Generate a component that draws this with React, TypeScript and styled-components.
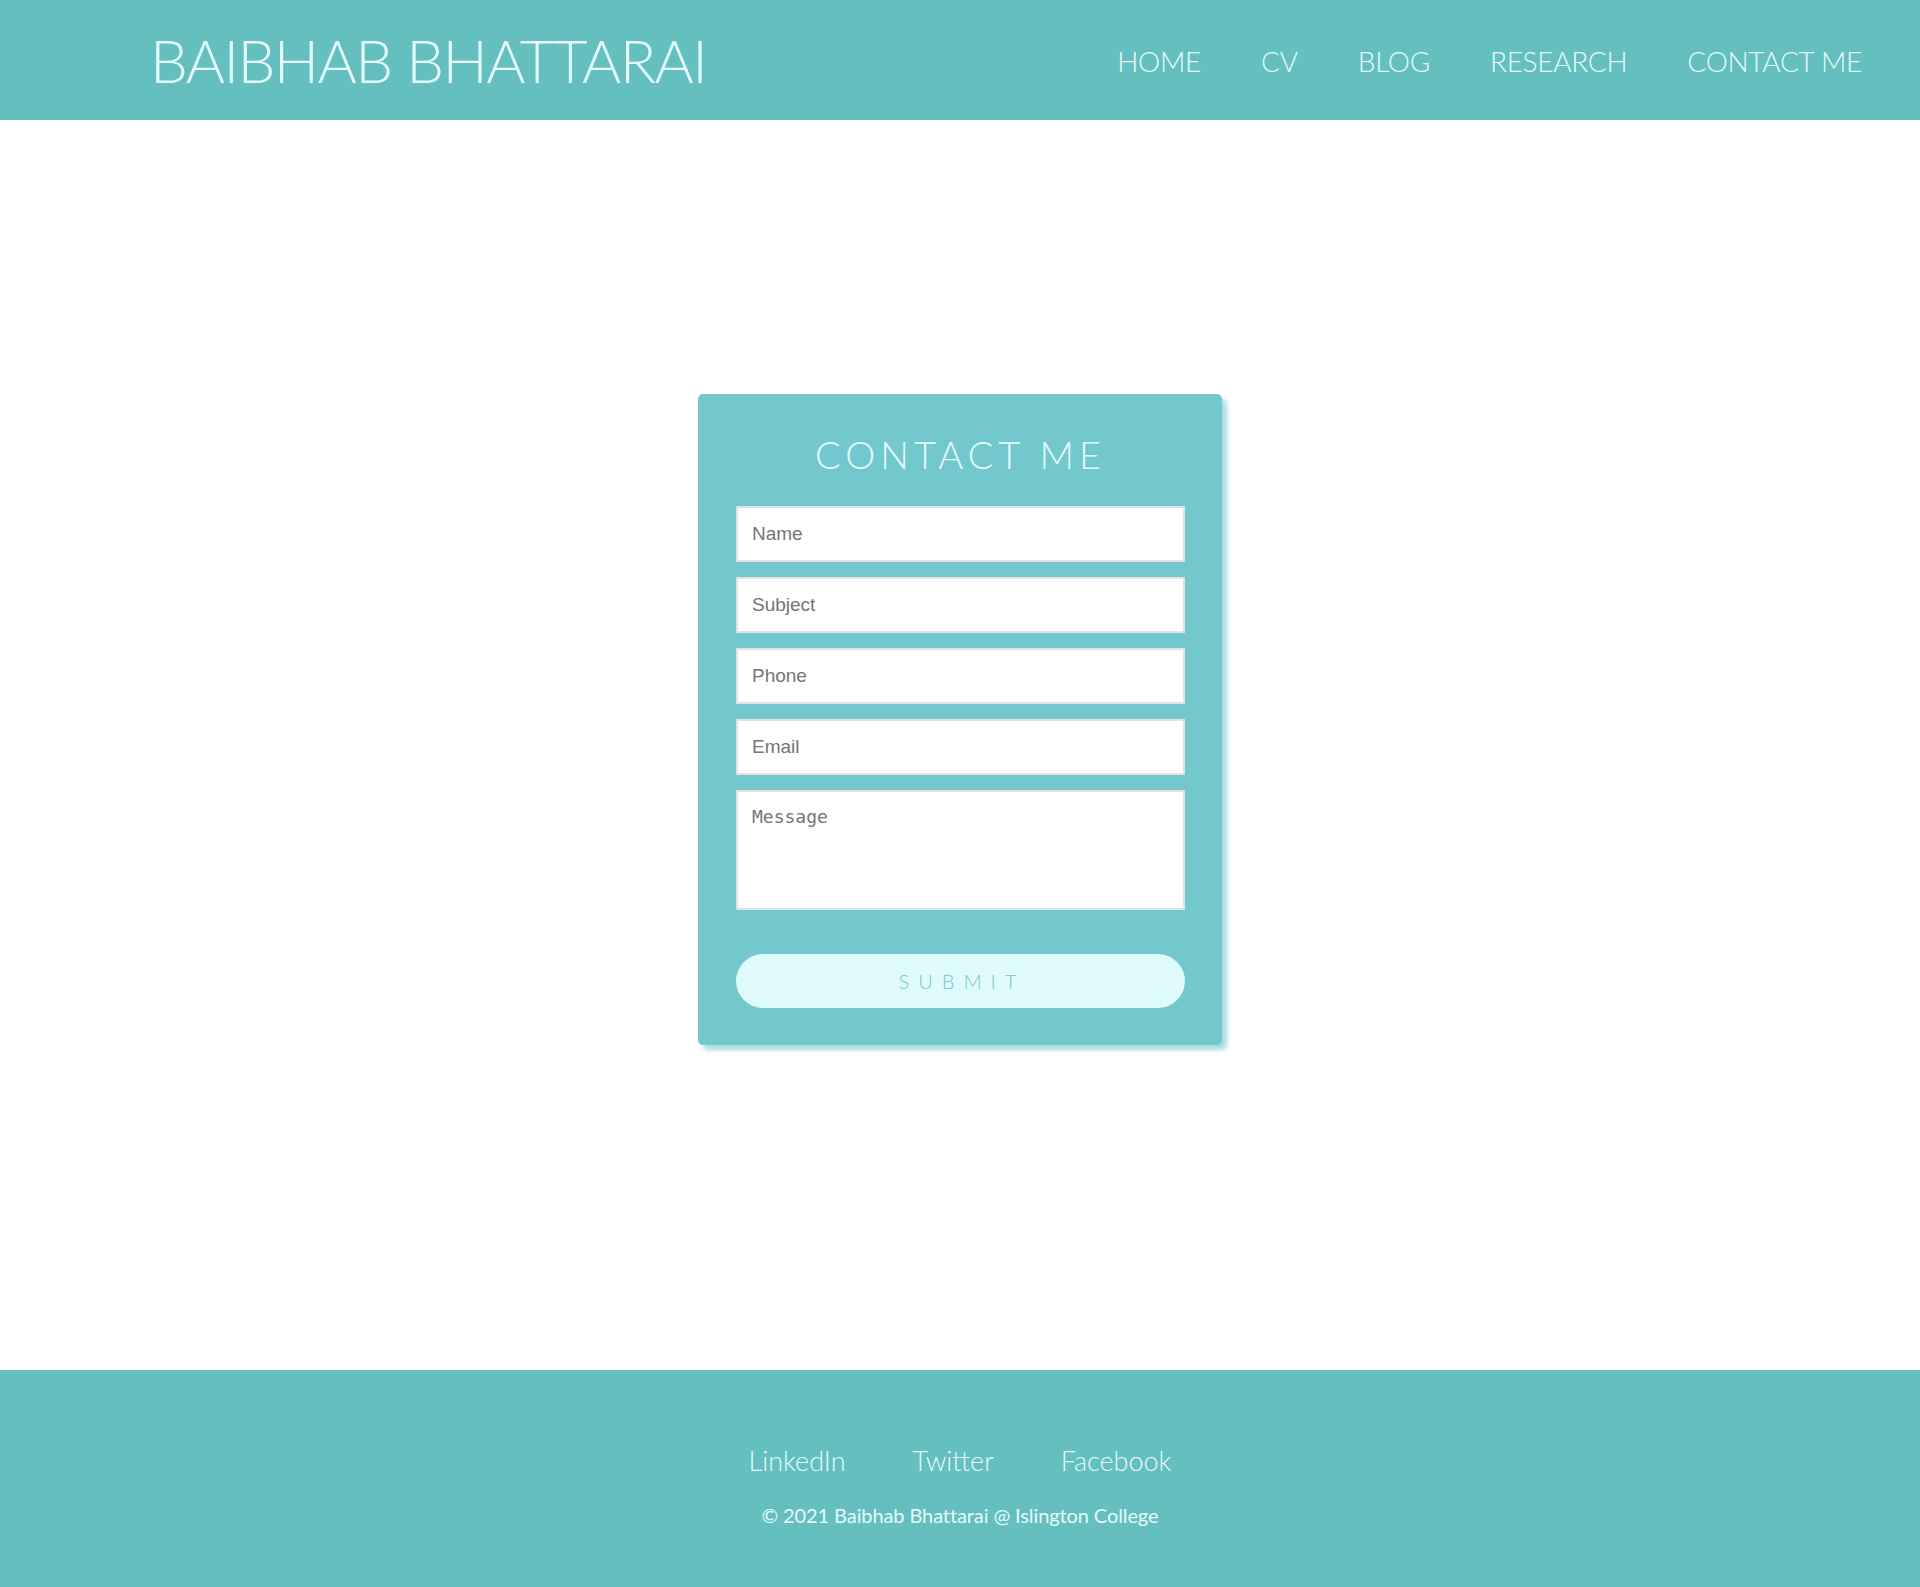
import styled, { createGlobalStyle } from "styled-components";

const GlobalStyle = createGlobalStyle`
  body {
    margin: 0;
    font-family: "Lato", "Open Sans", sans-serif;
    background: #ffffff;
  }
`;

const navLinks = ["HOME", "CV", "BLOG", "RESEARCH", "CONTACT ME"];
const socialLinks = ["LinkedIn", "Twitter", "Facebook"];
const fields = ["Name", "Subject", "Phone", "Email"];

export default function App() {
  return (
    <Page>
      <GlobalStyle />
      <Header>
        <Brand>BAIBHAB BHATTARAI</Brand>
        <Nav>
          {navLinks.map((link) => (
            <NavLink key={link} href="#">
              {link}
            </NavLink>
          ))}
        </Nav>
      </Header>

      <Main>
        <Card>
          <Heading>CONTACT ME</Heading>
          <Form onSubmit={(e) => e.preventDefault()}>
            {fields.map((field) => (
              <Input key={field} type="text" placeholder={field} />
            ))}
            <TextArea placeholder="Message" />
            <SubmitButton type="submit">SUBMIT</SubmitButton>
          </Form>
        </Card>
      </Main>

      <Footer>
        <Socials>
          {socialLinks.map((link) => (
            <SocialLink key={link} href="#">
              {link}
            </SocialLink>
          ))}
        </Socials>
        <Copyright>© 2021 Baibhab Bhattarai @ Islington College</Copyright>
      </Footer>
    </Page>
  );
}

const Page = styled.div`
  display: flex;
  flex-direction: column;
  min-height: 1587px;
`;

const Header = styled.header`
  height: 120px;
  background: #65bfbf;
  display: flex;
  align-items: center;
  justify-content: space-between;
  padding: 0 58px 0 150px;
  box-sizing: border-box;
`;

const Brand = styled.h1`
  margin: 0;
  font-family: "Lato", sans-serif;
  font-weight: 300;
  font-size: 60px;
  letter-spacing: -1.6px;
  color: #e4fbfb;
  line-height: 1;
`;

const Nav = styled.nav`
  display: flex;
  gap: 60px;
  padding-top: 2px;
`;

const NavLink = styled.a`
  font-family: "Lato", sans-serif;
  font-weight: 300;
  font-size: 28px;
  letter-spacing: -0.3px;
  color: #e4fbfb;
  text-decoration: none;
`;

const Main = styled.main`
  height: 1250px;
  display: flex;
  justify-content: center;
  align-items: flex-start;
  padding-top: 274px;
  box-sizing: border-box;
`;

const Card = styled.section`
  width: 524px;
  box-sizing: border-box;
  padding: 40px 37px 37px 38px;
  background: #72c8cc;
  border-radius: 5px;
  box-shadow: 5px 5px 4px rgba(114, 200, 204, 0.6);
`;

const Heading = styled.h2`
  margin: 0 0 32px;
  text-align: center;
  font-family: "Lato", sans-serif;
  font-weight: 300;
  font-size: 38px;
  letter-spacing: 5px;
  line-height: 40px;
  color: #e4fbfb;
`;

const Form = styled.form`
  display: flex;
  flex-direction: column;
  gap: 15px;
`;

const Input = styled.input`
  height: 56px;
  box-sizing: border-box;
  border: 2px solid #e2e2e2;
  padding: 0 14px;
  font-family: "Liberation Sans", Arial, sans-serif;
  font-size: 19px;
  color: #555;
  outline: none;

  &::placeholder {
    color: #757575;
  }
`;

const TextArea = styled.textarea`
  height: 120px;
  box-sizing: border-box;
  border: 2px solid #e2e2e2;
  padding: 14px 14px;
  font-family: "DejaVu Sans Mono", monospace;
  font-size: 18px;
  color: #555;
  resize: none;
  outline: none;

  &::placeholder {
    color: #757575;
  }
`;

const SubmitButton = styled.button`
  margin-top: 29px;
  height: 54px;
  border: none;
  border-radius: 27px;
  background: #e0fbfb;
  color: #72c8cc;
  font-family: "Lato", sans-serif;
  font-weight: 300;
  font-size: 20px;
  letter-spacing: 9px;
  padding-left: 9px;
  cursor: pointer;
`;

const Footer = styled.footer`
  height: 217px;
  background: #65bfbf;
  display: flex;
  flex-direction: column;
  align-items: center;
  padding-top: 75px;
  box-sizing: border-box;
`;

const Socials = styled.div`
  display: flex;
  gap: 67px;
`;

const SocialLink = styled.a`
  font-family: "Lato", sans-serif;
  font-weight: 300;
  font-size: 27px;
  color: #e4fbfb;
  text-decoration: none;
  line-height: 32px;
`;

const Copyright = styled.p`
  margin: 26px 0 0;
  font-family: "Lato", sans-serif;
  font-weight: 400;
  font-size: 20px;
  color: #e4fbfb;
  letter-spacing: -0.1px;
`;
